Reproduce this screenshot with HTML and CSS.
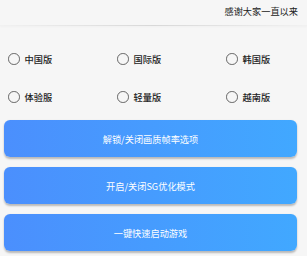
FILE: index.html
```html
<!DOCTYPE html>
<html lang="zh">
<head>
<meta charset="utf-8">
<link rel="stylesheet" href="styles.css">
</head>
<body>
<div class="page">
  <header class="top">
    <span class="thanks">感谢大家一直以来</span>
  </header>
  <div class="divider"></div>
  <div class="radios">
    <label class="radio"><span class="dot"></span><span>中国版</span></label>
    <label class="radio"><span class="dot"></span><span>国际版</span></label>
    <label class="radio"><span class="dot"></span><span>韩国版</span></label>
    <label class="radio"><span class="dot"></span><span>体验服</span></label>
    <label class="radio"><span class="dot"></span><span>轻量版</span></label>
    <label class="radio"><span class="dot"></span><span>越南版</span></label>
  </div>
  <div class="buttons">
    <button class="btn">解锁/关闭画质帧率选项</button>
    <button class="btn">开启/关闭SG优化模式</button>
    <button class="btn">一键快速启动游戏</button>
  </div>
</div>
</body>
</html>
```

FILE: styles.css
```css
html, body {
  margin: 0;
  padding: 0;
  background: #f6f6f6;
  font-family: "Noto Sans CJK SC", "Noto Sans", sans-serif;
}
.page {
  width: 307px;
  height: 256px;
  overflow: hidden;
}
.top {
  height: 25px;
  display: flex;
  justify-content: flex-end;
  align-items: center;
  padding-right: 9px;
}
.thanks {
  font-size: 9.2px;
  color: #222;
  line-height: 12px;
  margin-top: -4px;
}
.divider {
  height: 1px;
  background: linear-gradient(to right, rgba(0,0,0,0.02), rgba(0,0,0,0.12) 50%, rgba(0,0,0,0.02));
  box-shadow: 0 1px 2px rgba(0,0,0,0.04);
}
.radios {
  display: grid;
  grid-template-columns: 109px 109px 1fr;
  grid-auto-rows: 38px;
  padding: 14px 0 0 8px;
}
.radio {
  display: flex;
  align-items: center;
  gap: 5px;
  font-size: 9.2px;
  font-weight: 500;
  color: #222;
  height: 38px;
}
.dot {
  width: 9.6px;
  height: 9.6px;
  border: 1.3px solid #666;
  border-radius: 50%;
  box-sizing: content-box;
}
.buttons {
  display: flex;
  flex-direction: column;
  gap: 10px;
  padding: 4px 10px 0 4px;
}
.btn {
  height: 37px;
  border: none;
  border-radius: 6px;
  background: linear-gradient(to right, #4b8ffd, #41a8ff);
  color: #fff;
  font-family: "Noto Sans CJK SC", "Noto Sans", sans-serif;
  font-size: 9.2px;
  box-shadow: 0 1.5px 2px rgba(0,0,0,0.25);
  padding: 0;
}
```
